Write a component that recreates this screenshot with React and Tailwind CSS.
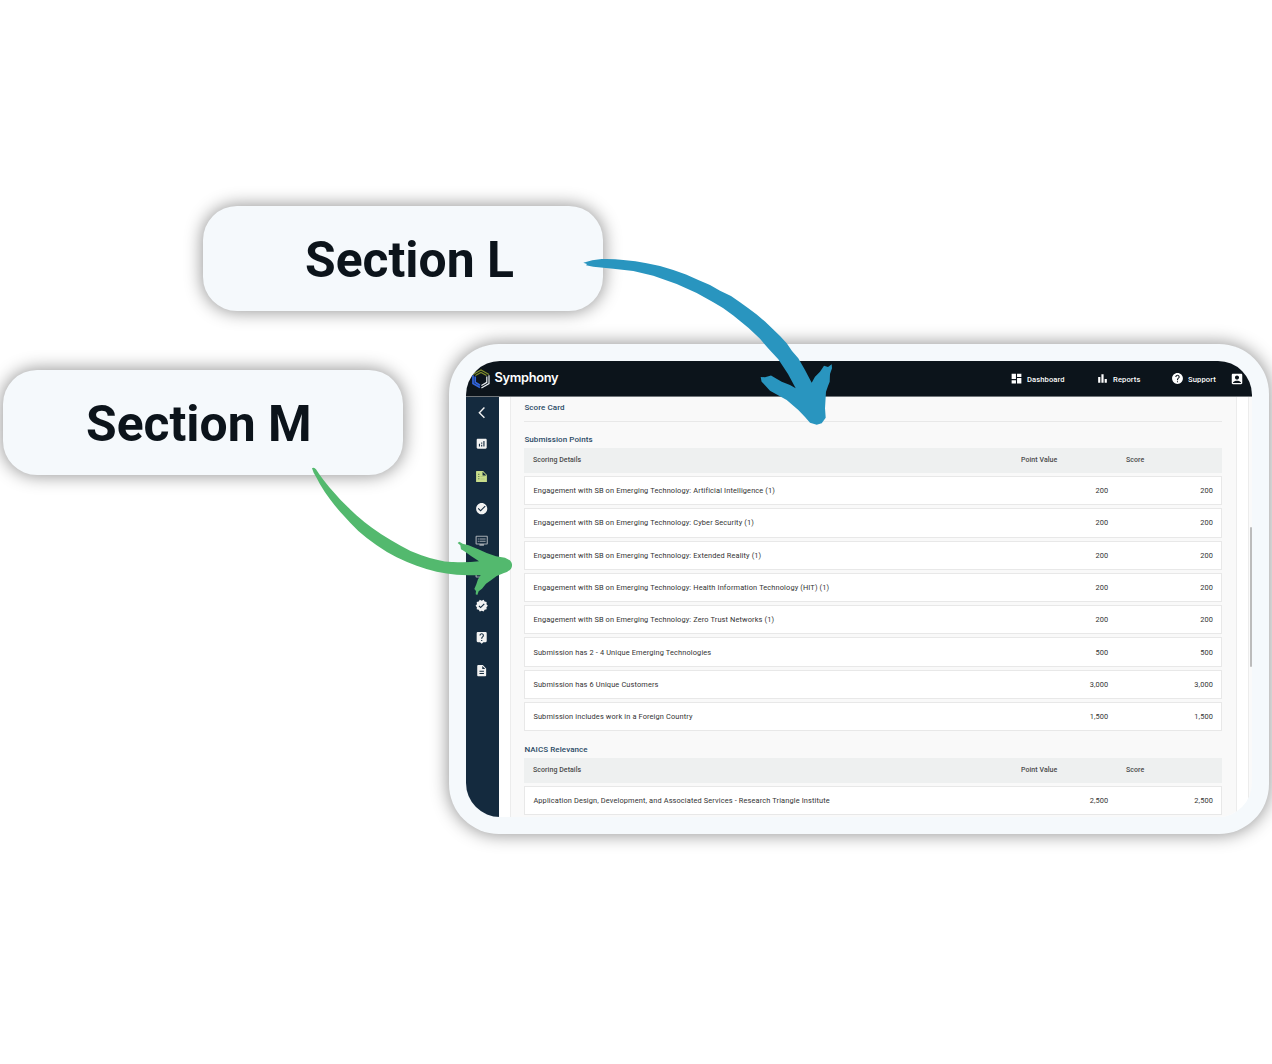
import React from "react";
import {
  MdDashboard, MdBarChart, MdHelp, MdAccountBox, MdArrowBackIosNew, MdAnalytics,
  MdCheckCircle, MdDvr, MdVerified, MdLiveHelp, MdDescription,
} from "react-icons/md";

const submission = [
  ["Engagement with SB on Emerging Technology: Artificial Intelligence (1)", "200"],
  ["Engagement with SB on Emerging Technology: Cyber Security (1)", "200"],
  ["Engagement with SB on Emerging Technology: Extended Reality (1)", "200"],
  ["Engagement with SB on Emerging Technology: Health Information Technology (HIT) (1)", "200"],
  ["Engagement with SB on Emerging Technology: Zero Trust Networks (1)", "200"],
  ["Submission has 2 - 4 Unique Emerging Technologies", "500"],
  ["Submission has 6 Unique Customers", "3,000"],
  ["Submission includes work in a Foreign Country", "1,500"],
];
const naics = [
  ["Application Design, Development, and Associated Services - Research Triangle Institute", "2,500"],
];

function Callout({ children, className }) {
  return (
    <div className={`absolute flex h-[105px] w-[400px] items-center rounded-[34px] bg-[#f5f9fc] pt-[5px] text-[49.8px] leading-none font-bold text-[#0c141b] shadow-[0_0_17px_1px_rgba(0,0,0,0.42)] ${className}`}>
      {children}
    </div>
  );
}

function Table({ title, rows }) {
  return (
    <section>
      <h2 className="h-[17px] pl-[0.4px] text-[8px] leading-[17px] font-medium tracking-[0.08px] text-[#2a4a66]">{title}</h2>
      <div className="mb-[3px] flex h-[25px] items-center bg-[#eef0f0] px-[9px] text-[7px] font-medium tracking-[0.06px] text-[#4a4a4a]">
        <span className="w-[488px]">Scoring Details</span>
        <span className="w-[105px]">Point Value</span>
        <span>Score</span>
      </div>
      {rows.map(([name, value]) => (
        <div key={name} className="mb-[3px] flex h-[29.3px] items-center border border-[#e8e8e8] bg-white pr-[8px] pl-[8.4px] text-[7.4px] tracking-[0.13px] text-[#333]">
          <span className="w-[485px] whitespace-nowrap">{name}</span>
          <span className="w-[90px] text-right">{value}</span>
          <span className="flex-1 text-right">{value}</span>
        </div>
      ))}
    </section>
  );
}

function ChecklistFile() {
  return (
    <svg viewBox="0 0 24 24" className="size-[13px] fill-[#c8dd8b]">
      <path d="M3 2h12l7 7v13H3a1 1 0 0 1-1-1V3a1 1 0 0 1 1-1z" />
      <path d="M14 3v7h7z" fill="#142a3e" />
      <path d="M6 7h2v2H6zM6 11h2v2H6zM6 15h2v2H6z" fill="#50694c" />
      <path d="M10 12h8v1H10zM10 16h8v1H10z" fill="#9db374" />
    </svg>
  );
}

function Logo() {
  return (
    <svg viewBox="0 0 18 20" className="mt-[-2px] h-[20px] w-[18px]" fill="none" strokeWidth="1.2">
      <path d="M1 5.4 9 .9l8 4.5M3.4 6.6 9 3.4l5.6 3.2" stroke="#808d2c" />
      <path d="M1 6.2v8.4l7 4M3.2 7.4v5.9L8 16.2" stroke="#3264dc" strokeWidth="1.7" />
      <path d="M17 6.2v8.4l-7.6 4.5M14.8 7.4v5.9L9.4 16.4" stroke="#e8edf0" />
    </svg>
  );
}

const sidebar = [MdArrowBackIosNew, MdAnalytics, ChecklistFile, MdCheckCircle, MdDvr, MdDvr, MdVerified, MdLiveHelp, MdDescription];

export default function App() {
  return (
    <div className="relative h-[1064px] w-[1272px] overflow-hidden bg-white pt-[344px] pl-[449px] font-[Roboto,sans-serif]">
      <div className="h-[490px] w-[820px] rounded-[50px] bg-[#f5f9fc] p-[17px] shadow-[0_0_17px_1px_rgba(0,0,0,0.42)]">
        <div className="flex h-[456px] w-[786px] flex-col overflow-hidden rounded-[34px]">
          <header className="flex h-[36px] shrink-0 items-center border-b border-[#71767a] bg-[#0c141b] pt-[2px] pl-[6px] text-[7.6px] font-medium tracking-[0.1px] text-white">
            <Logo />
            <span className="mt-[-3px] ml-[4.5px] w-[515.5px] font-[Inter,sans-serif] text-[12.8px] font-semibold tracking-[-0.3px]">Symphony</span>
            <span className="flex w-[86px] items-center gap-[4px]"><MdDashboard className="mt-[-2px] size-[13px]" />Dashboard</span>
            <span className="flex w-[75px] items-center gap-[4px]"><MdBarChart className="mt-[-2px] size-[13px]" />Reports</span>
            <span className="flex w-[59px] items-center gap-[4px]"><MdHelp className="mt-[-2px] size-[13px]" />Support</span>
            <MdAccountBox className="mt-[-2px] size-[14px]" />
          </header>
          <div className="flex min-h-0 flex-1">
            <nav className="flex w-[33px] shrink-0 flex-col items-center bg-[#142a3e] text-[13.4px] text-[#f2f2f2]">
              {sidebar.map((Icon, i) => (
                <span key={i} className={`flex w-full shrink-0 items-center justify-center pr-[2.4px] ${i === 0 ? "h-[31px]" : "h-[32.3px]"} ${i === 4 || i === 5 ? "text-[#a3aab1]" : ""}`}><Icon /></span>
              ))}
            </nav>
            <main className="flex-1 overflow-hidden bg-white pl-[11px]">
              <div className="h-full w-[727px] border-x border-[#ececec] bg-[#f9f9f9] pr-[14px] pl-[13px]">
                <h1 className="mb-[9px] h-[25px] border-b border-[#e8e8e8] pl-[0.4px] text-[8px] leading-[22px] font-medium tracking-[0.08px] text-[#2a4a66]">Score Card</h1>
                <Table title="Submission Points" rows={submission} />
                <div className="h-[6.4px]" />
                <Table title="NAICS Relevance" rows={naics} />
              </div>
            </main>
            <div className="w-[4px] border-l border-[#ececec] bg-[#fafafa] pt-[130px] pl-px">
              <div className="h-[140px] w-[2px] rounded-full bg-[#bcbcbc]" />
            </div>
          </div>
        </div>
      </div>
      <Callout className="top-[206px] left-[203px] pl-[102px]">Section L</Callout>
      <Callout className="top-[370px] left-[3px] pl-[83px]">Section M</Callout>
      <svg viewBox="0 0 1272 1064" className="pointer-events-none absolute inset-0">
        <path fill="#2995bf" d="M583.3 262.7Q592 259.5 601.7 259Q613 258.6 623.3 260Q636 261 646.7 263.3L660 266L673.3 270L686 274.5L698.3 280L710 285L720 290.7L731 296L740 302.3L748 308L756.7 314.5L765 321.5L773.3 329.5L780 336L786.7 343.3L792 351L798.3 358.3L805 370L811.7 382.7L815 376.7L820 371.7L824 365.7L828 367L831.7 364.2L832 368.3L830 374L829.7 381.7L828 386L826 391.7L825 408.3L825.7 417.7L821.7 423.3L816.7 424.8L810 422.7L805 417L798.3 410L786.7 400L770 390.7L761.5 381.5L760.7 377L765 377.3L771 375.5L781.7 381.7L790 385L795.7 388.3L788 374L778.3 359.3L769 349.3L760 338.8L748.3 327.7L733.3 315.5L723 308L713.3 302.3L696.7 293L676.7 284L653.3 275.7L633.3 271L613.3 268.7L593.3 266.7L586 265.3L587 264Z" />
        <g transform="translate(290 450) scale(.33333)">
          <path fill="#53b96e" d="M66 55Q70 51 78 58Q87 73 100 89Q116 110 134 130Q152 152 174 172Q198 196 224 217Q248 236 274 253Q302 271 332 287Q362 305 394 316Q418 325 444 330Q468 337 490 336Q530 338 567 334L543 318L522 303L513 298L511 286L503 279L508 275L518 281L536 286L550 292L565 298L590 309L618 319L645 323Q660 329 664 337Q669 347 663 356Q655 366 642 369L620 378L604 390L588 401L576 416L566 424L562 435L557 433L558 423L553 417L559 403L564 388L572 376Q535 376 500 374Q470 371 440 365Q410 358 380 347Q348 336 320 322Q288 306 260 286Q230 265 205 243Q180 219 160 196Q137 171 120 148Q102 124 90 103L80 84L71 68Z" />
        </g>
      </svg>
    </div>
  );
}
